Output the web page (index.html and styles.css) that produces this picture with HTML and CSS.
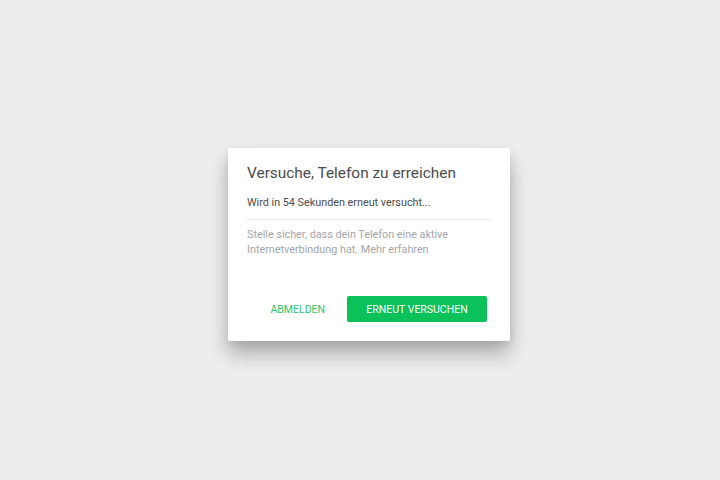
FILE: index.html
```html
<!DOCTYPE html>
<html lang="de">
<head>
  <meta charset="UTF-8">
  <meta name="viewport" content="width=device-width, initial-scale=1.0">
  <title>Versuche, Telefon zu erreichen</title>
  <link rel="stylesheet" href="styles.css">
</head>
<body>
  <div class="dialog">
    <h1 class="dialog-title">Versuche, Telefon zu erreichen</h1>
    <p class="dialog-status">Wird in 54 Sekunden erneut versucht...</p>
    <p class="dialog-hint">Stelle sicher, dass dein Telefon eine aktive Internetverbindung hat. <a href="#">Mehr erfahren</a></p>
    <div class="dialog-actions">
      <button class="button button-flat">Abmelden</button>
      <button class="button button-primary">Erneut versuchen</button>
    </div>
  </div>
</body>
</html>
```

FILE: styles.css
```css
body {
  font-family: Roboto, "Open Sans", sans-serif;
  margin: 0;
  height: 100vh;
  background-color: #ededed;
  overflow: hidden;
}

.dialog {
  width: 282px;
  height: 193px;
  margin: 148px 0 0 228px;
  box-sizing: border-box;
  padding: 15px 19px 0 19px;
  background-color: white;
  border-radius: 2px;
  box-shadow: 0 13px 20px rgba(0, 0, 0, 0.27), 0 3px 8px rgba(0, 0, 0, 0.08);
}

.dialog-title {
  margin: 0;
  font-size: 15.4px;
  line-height: 20px;
  font-weight: normal;
  color: #4b4b4b;
}

.dialog-status {
  margin: 12px 0 0;
  padding-bottom: 8px;
  border-bottom: 1px solid #e6e6e6;
  font-size: 10.8px;
  line-height: 16px;
  color: #4b4b4b;
}

.dialog-hint {
  margin: 7px 0 0;
  font-size: 10.8px;
  line-height: 15px;
  color: #a3a6a8;
}

.dialog-hint a {
  color: inherit;
  text-decoration: none;
}

.dialog-actions {
  display: flex;
  justify-content: flex-end;
  margin-top: 39px;
  margin-right: 4px;
}

.button {
  height: 26px;
  padding: 0 18px;
  border: none;
  border-radius: 2px;
  font-family: inherit;
  font-size: 10.5px;
  text-transform: uppercase;
  white-space: nowrap;
  cursor: pointer;
}

.button-flat {
  padding: 0 22px;
  background: none;
  color: #2fc56a;
}

.button-primary {
  width: 140px;
  background-color: #0ac15a;
  color: white;
}
```
